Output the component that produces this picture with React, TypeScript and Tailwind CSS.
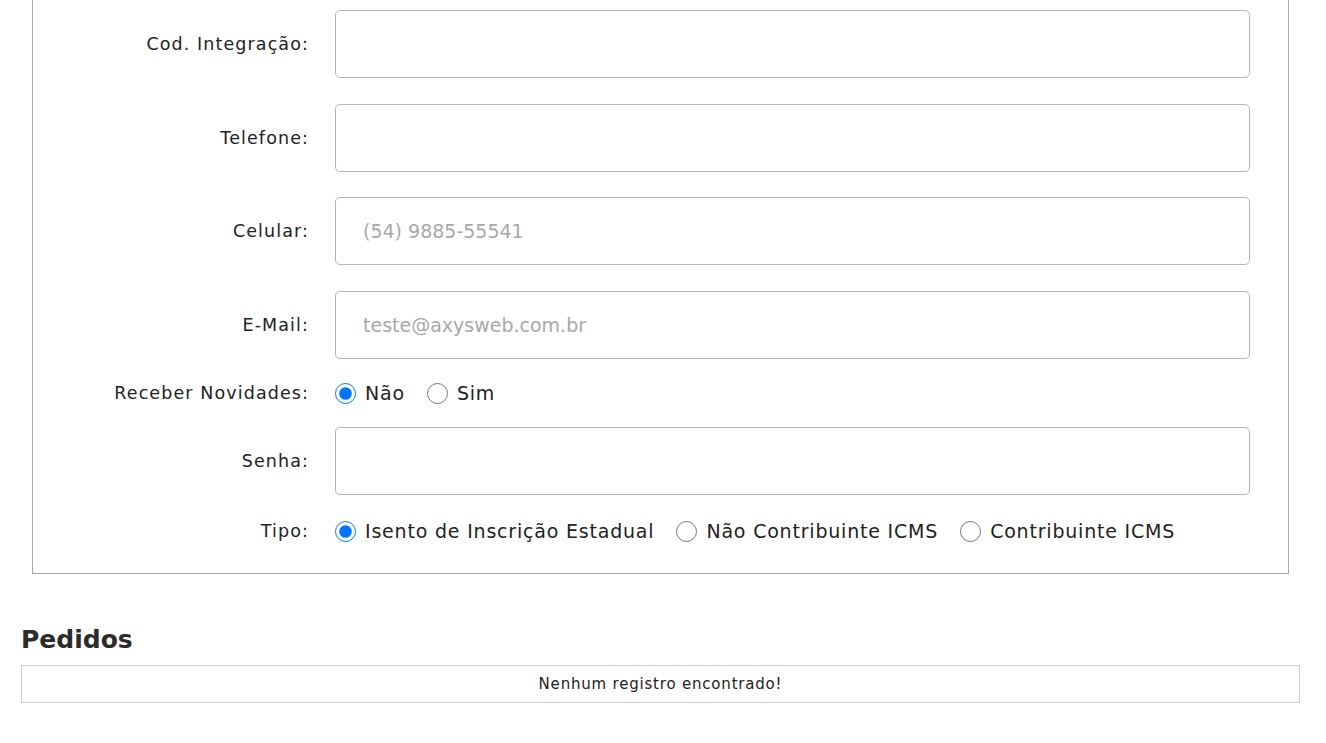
import React from "react"

const font = { fontFamily: '"DejaVu Sans", "Liberation Sans", sans-serif' }

function Field({ label, placeholder }: { label: string; placeholder?: string }) {
  return (
    <div className="flex items-center">
      <label className="w-[276px] shrink-0 text-right text-[17.5px] tracking-[1.1px] text-[#222]">{label}</label>
      <input
        type="text"
        placeholder={placeholder}
        className="ml-[26px] h-[68px] w-[915px] rounded-[5px] border border-[#b5b5b5] bg-white px-[27px] text-[19px] text-[#333] placeholder:text-[#a8a8a8] outline-none"
      />
    </div>
  )
}

function Radio({ name, label, checked }: { name: string; label: string; checked?: boolean }) {
  return (
    <label className="flex items-center gap-[9px] text-[19px] tracking-[0.8px] text-[#222]">
      <input type="radio" name={name} defaultChecked={checked} className="m-0 h-[21px] w-[21px] accent-[#0075ff]" />
      <span>{label}</span>
    </label>
  )
}

export default function App() {
  return (
    <div className="min-h-screen bg-white" style={font}>
      <div className="ml-[32px] mr-[37px] border-x border-b border-[#a9a9a9] pt-[10px] pb-[28px]">
        <div className="flex flex-col gap-[25.7px]">
          <Field label="Cod. Integração:" />
          <Field label="Telefone:" />
          <Field label="Celular:" placeholder="(54) 9885-55541" />
          <Field label="E-Mail:" placeholder="teste@axysweb.com.br" />
        </div>
        <div className="mt-[20px] flex h-[28px] items-center">
          <span className="w-[276px] shrink-0 text-right text-[17.5px] tracking-[1.1px] text-[#222]">Receber Novidades:</span>
          <div className="ml-[26px] flex items-center gap-[22px]">
            <Radio name="novidades" label="Não" checked />
            <Radio name="novidades" label="Sim" />
          </div>
        </div>
        <div className="mt-[20px]">
          <Field label="Senha:" />
        </div>
        <div className="mt-[22px] flex h-[28px] items-center">
          <span className="w-[276px] shrink-0 text-right text-[17.5px] tracking-[1.1px] text-[#222]">Tipo:</span>
          <div className="ml-[26px] flex items-center gap-[22px]">
            <Radio name="tipo" label="Isento de Inscrição Estadual" checked />
            <Radio name="tipo" label="Não Contribuinte ICMS" />
            <Radio name="tipo" label="Contribuinte ICMS" />
          </div>
        </div>
      </div>

      <div className="ml-[21px] mr-[26px] mt-[50px]">
        <h2 className="text-[25px] font-semibold leading-[32px] text-[#2b2b2b]">Pedidos</h2>
        <div className="mt-[9px] flex h-[38px] items-center justify-center border border-[#cccccc] text-[15px] tracking-[0.8px] text-[#222]">
          Nenhum registro encontrado!
        </div>
      </div>
    </div>
  )
}
